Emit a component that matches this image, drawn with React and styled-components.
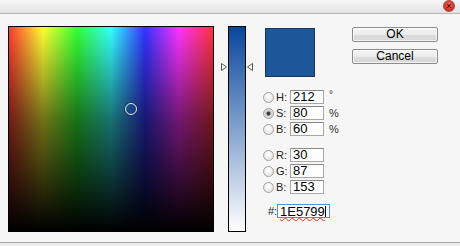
import React from "react";
import styled, { createGlobalStyle } from "styled-components";

const GlobalStyle = createGlobalStyle`
  html, body {
    margin: 0;
    padding: 0;
    background: #f5f5f5;
  }
`;

const Window = styled.div`
  width: 460px;
  height: 246px;
  display: flex;
  flex-direction: column;
  background: #f6f6f6;
  font-family: "Liberation Sans", Arial, sans-serif;
  color: #1e1e1e;
  overflow: hidden;
`;

const TitleBar = styled.div`
  height: 13px;
  border-bottom: 1px solid #b4b4b4;
  background: linear-gradient(#f7f7f7, #e2e2e2);
  display: flex;
  justify-content: flex-end;
  align-items: center;
  padding-right: 5px;
`;

const CloseButton = styled.div`
  width: 12px;
  height: 12px;
  margin-top: -1px;
  border-radius: 50%;
  box-sizing: border-box;
  border: 1px solid #b3403a;
  background: radial-gradient(circle at 50% 40%, #f08070, #d2342a 60%, #a82a22);
  display: flex;
  align-items: center;
  justify-content: center;
  color: #5a0d08;
  font-size: 9px;
  line-height: 1;
  font-weight: bold;
`;

const Body = styled.div`
  flex: 1;
  display: flex;
  align-items: flex-start;
  padding: 12px 0 0 8px;
`;

const Field = styled.div`
  position: relative;
  width: 206px;
  height: 206px;
  box-sizing: border-box;
  border: 1px solid #000;
  background: linear-gradient(
      to bottom,
      rgba(0, 0, 0, 0),
      rgba(0, 0, 0, 0.55) 45%,
      #000
    ),
    linear-gradient(
      to right,
      #ff3b33,
      #ffff33,
      #33ff33,
      #33ffff,
      #3333ff,
      #ff33ff,
      #ff3340
    );
`;

const Marker = styled.div`
  position: absolute;
  width: 10px;
  height: 10px;
  margin: -6px 0 0 -6px;
  border-radius: 50%;
  border: 1px solid #e8eef8;
  box-shadow: 0 0 0 1px rgba(30, 40, 70, 0.7);
`;

const SliderWrap = styled.div`
  position: relative;
  margin-left: 14px;
`;

const Slider = styled.div`
  width: 18px;
  height: 206px;
  box-sizing: border-box;
  border: 1px solid #000;
  background: linear-gradient(#08469c, #ffffff);
`;

const Arrow = styled.svg`
  position: absolute;
  top: 37px;
  left: ${(p) => (p.$side === "left" ? "-7px" : "19px")};
`;

const Panel = styled.div`
  margin-left: 17px;
  width: 85px;
  display: flex;
  flex-direction: column;
`;

const Swatch = styled.div`
  width: 50px;
  height: 49px;
  margin: 2px 0 0 2px;
  box-sizing: border-box;
  border: 1px solid #17345a;
  background: #1e5799;
`;

const Group = styled.div`
  display: flex;
  flex-direction: column;
  margin-top: ${(p) => p.$gap}px;
`;

const Row = styled.div`
  height: 16px;
  display: flex;
  align-items: center;
  font-size: 11px;
  color: #222;
`;

const Radio = styled.span`
  width: 11px;
  height: 11px;
  margin: 0 2px 0 0;
  box-sizing: border-box;
  border-radius: 50%;
  border: 1px solid #a2a2a2;
  background: ${(p) =>
    p.$checked
      ? "radial-gradient(circle, #2a2a2a 0, #4a4a4a 1.5px, #cfcfcf 2.5px, #eeeeee 100%)"
      : "radial-gradient(circle at 50% 35%, #ffffff, #dcdcdc)"};
`;

const Label = styled.span`
  width: ${(p) => p.$w || 14}px;
  margin-left: ${(p) => p.$ml || 0}px;
`;

const Input = styled.div`
  width: 34px;
  height: 14px;
  box-sizing: border-box;
  border: 1px solid #a8a8a8;
  border-top-color: #8a8a8a;
  background: #fff;
  font-size: 13px;
  line-height: 12px;
  padding-left: 2px;
  color: #000;
`;

const Unit = styled.span`
  margin-left: 5px;
  color: #333;
  font-size: ${(p) => (p.$deg ? "10px" : "11px")};
  align-self: ${(p) => (p.$deg ? "flex-start" : "center")};
`;

const HexInput = styled(Input)`
  width: 53px;
  border: 1px solid #4a90dc;
  display: flex;
  align-items: center;
`;

const HexText = styled.span`
  text-decoration: underline wavy #e03030;
  text-decoration-thickness: 1px;
  text-underline-offset: 1px;
  border-right: 1px solid #000;
  line-height: 11px;
`;

const Buttons = styled.div`
  margin: 1px 0 0 4px;
  display: flex;
  flex-direction: column;
  gap: 7px;
`;

const Button = styled.div`
  width: 86px;
  height: 15px;
  box-sizing: border-box;
  border: 1px solid #8c8c8c;
  border-radius: 2px;
  background: linear-gradient(#f4f4f4 0%, #ececec 50%, #dedede 51%, #d6d6d6 100%);
  box-shadow: inset 0 0 0 1px rgba(255, 255, 255, 0.7);
  font-size: 12px;
  line-height: 13px;
  text-align: center;
  color: #000;
`;

const Footer = styled.div`
  height: 3px;
  border-top: 1px solid #a9a9a9;
  background: #ececec;
`;

const hsb = [
  { key: "H", value: "212", unit: "°" },
  { key: "S", value: "80", unit: "%", checked: true },
  { key: "B", value: "60", unit: "%" },
];

const rgb = [
  { key: "R", value: "30" },
  { key: "G", value: "87" },
  { key: "B", value: "153" },
];

const ValueRow = ({ item }) => (
  <Row>
    <Radio $checked={item.checked} />
    <Label>{item.key}:</Label>
    <Input>{item.value}</Input>
    {item.unit && <Unit $deg={item.unit === "°"}>{item.unit}</Unit>}
  </Row>
);

const App = () => {
  return (
    <>
      <GlobalStyle />
      <Window>
        <TitleBar>
          <CloseButton>×</CloseButton>
        </TitleBar>
        <Body>
          <Field>
            <Marker style={{ left: 122, top: 82 }} />
          </Field>
          <SliderWrap>
            <Slider />
            <Arrow $side="left" width="6" height="8" viewBox="0 0 6 8">
              <path d="M0.5 0.5 L5.5 4 L0.5 7.5 Z" fill="#fff" stroke="#555" />
            </Arrow>
            <Arrow $side="right" width="6" height="8" viewBox="0 0 6 8">
              <path d="M5.5 0.5 L0.5 4 L5.5 7.5 Z" fill="#fff" stroke="#555" />
            </Arrow>
          </SliderWrap>
          <Panel>
            <Swatch />
            <Group $gap={12}>
              {hsb.map((item) => (
                <ValueRow key={item.key} item={item} />
              ))}
            </Group>
            <Group $gap={10}>
              {rgb.map((item) => (
                <ValueRow key={item.key} item={item} />
              ))}
            </Group>
            <Group $gap={8}>
              <Row>
                <Label $w={9} $ml={5}>
                  #:
                </Label>
                <HexInput>
                  <HexText>1E5799</HexText>
                </HexInput>
              </Row>
            </Group>
          </Panel>
          <Buttons>
            <Button>OK</Button>
            <Button>Cancel</Button>
          </Buttons>
        </Body>
        <Footer />
      </Window>
    </>
  );
};

export default App;
